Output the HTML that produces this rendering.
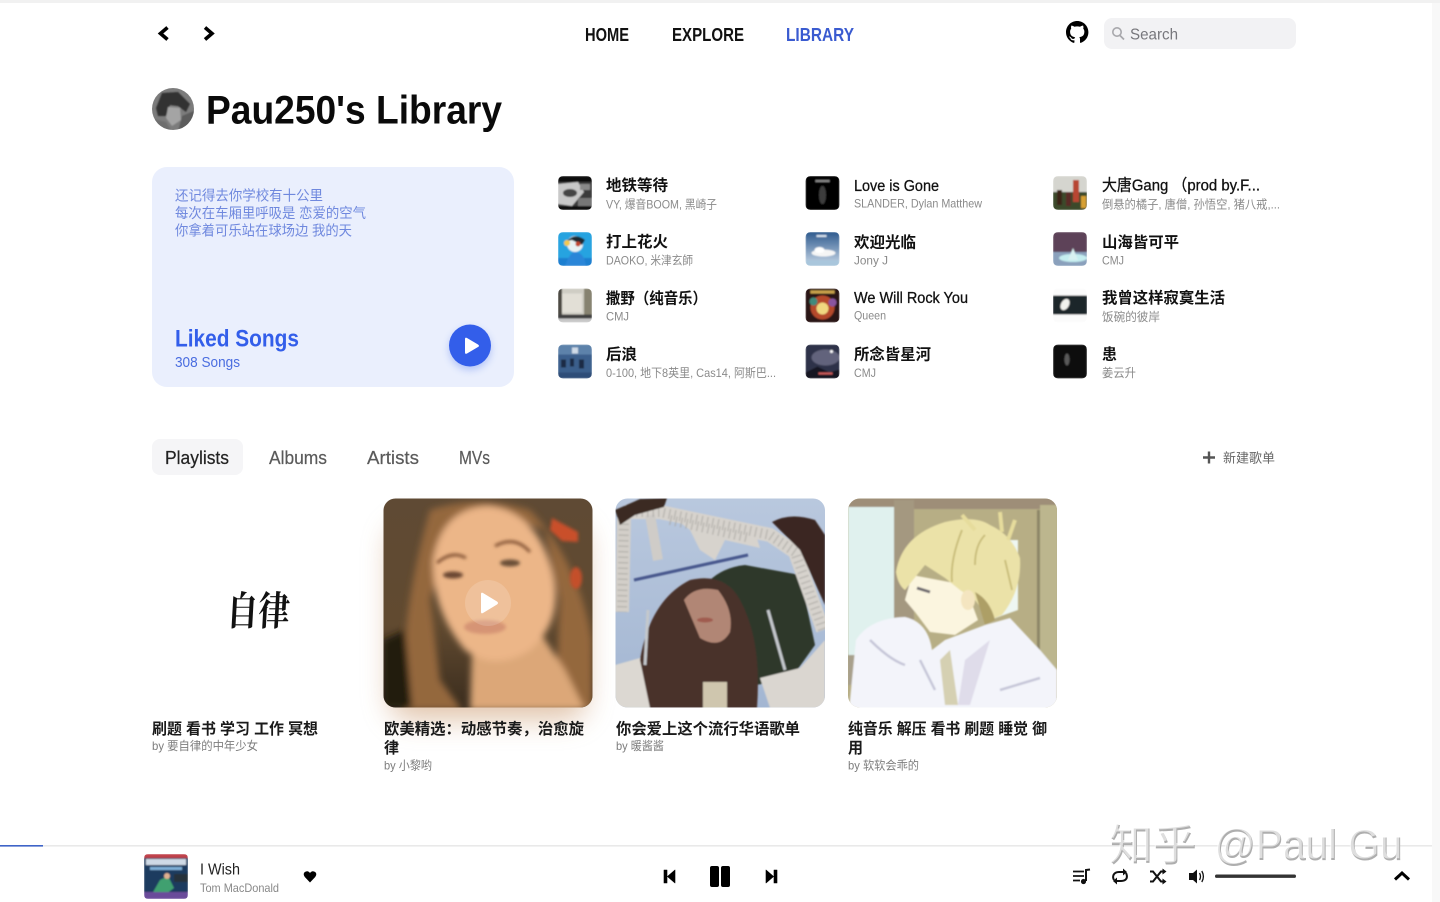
<!DOCTYPE html>
<html><head><meta charset="utf-8"><title>Pau250's Library</title>
<style>
html,body{margin:0;padding:0;background:#fff;width:1440px;height:902px;overflow:hidden}
svg{display:block}
text{font-family:"Liberation Sans","Noto Sans CJK SC",sans-serif}
.tt{font-size:15.5px;font-weight:700;fill:#111}
.tl{font-size:16px;font-weight:400;fill:#111;stroke:#111;stroke-width:.3px}
.st{font-size:12px;fill:#8a8a8a}
.ct{font-size:15.5px;font-weight:700;fill:#1a1a1a}
.cs{font-size:12px;fill:#7d7d7d}
.tab{font-size:18px;fill:#5a5a5a;stroke:#5a5a5a;stroke-width:.2px}
.nav{font-size:18px;font-weight:700;fill:#111}
</style></head><body>
<svg width="1440" height="902" viewBox="0 0 1440 902" xmlns="http://www.w3.org/2000/svg">
<defs>
<clipPath id="t"><rect width="34" height="34" rx="5"/></clipPath>
<clipPath id="c1"><rect x="383.5" y="498.5" width="209" height="209" rx="12"/></clipPath>
<clipPath id="c2"><rect x="615.5" y="498.5" width="209.5" height="209" rx="12"/></clipPath>
<clipPath id="c3"><rect x="848" y="498.5" width="209" height="209" rx="12"/></clipPath>
<clipPath id="pc"><rect width="44" height="45" rx="4"/></clipPath>
<clipPath id="av"><circle cx="173" cy="109" r="21"/></clipPath>
<filter id="b07" x="-10%" y="-10%" width="120%" height="120%"><feGaussianBlur stdDeviation=".7"/></filter>
<filter id="b1" x="-10%" y="-10%" width="120%" height="120%"><feGaussianBlur stdDeviation=".9"/></filter>
<filter id="b2" x="-10%" y="-10%" width="120%" height="120%"><feGaussianBlur stdDeviation="1.6"/></filter>
<filter id="b5" x="-20%" y="-20%" width="140%" height="140%"><feGaussianBlur stdDeviation="3.5"/></filter>
<filter id="b16" x="-30%" y="-30%" width="160%" height="160%"><feGaussianBlur stdDeviation="14"/></filter>
<filter id="bs" x="-50%" y="-50%" width="200%" height="200%"><feGaussianBlur stdDeviation="4"/></filter>
<linearGradient id="g1" x1="0" y1="0" x2="0" y2="1"><stop offset="0" stop-color="#5f4a34"/><stop offset=".6" stop-color="#614a30"/><stop offset="1" stop-color="#3b2d1e"/></linearGradient>
<linearGradient id="g2" x1="0" y1="0" x2="0" y2="1"><stop offset="0" stop-color="#b9c8de"/><stop offset="1" stop-color="#a3b6d2"/></linearGradient>
<linearGradient id="sk" x1="0" y1="0" x2="0" y2="1"><stop offset="0" stop-color="#2e5a8e"/><stop offset="1" stop-color="#c9d8e8"/></linearGradient>
</defs>

<rect width="1440" height="902" fill="#fff"/>
<rect width="1440" height="3" fill="#f1f1f1"/>
<rect x="1432" y="3" width="8" height="899" fill="#f8f8f8"/>

<!-- top nav -->
<path d="M167.500 27.500 L160.500 33.500 L167.500 39.500" fill="none" stroke="#000" stroke-width="3.600"/>
<path d="M205 27.500 L212 33.500 L205 39.500" fill="none" stroke="#000" stroke-width="3.600"/>
<text class="nav" x="585" y="41" textLength="44" lengthAdjust="spacingAndGlyphs">HOME</text>
<text class="nav" x="672" y="41" textLength="72" lengthAdjust="spacingAndGlyphs">EXPLORE</text>
<text class="nav" x="786" y="41" textLength="68" lengthAdjust="spacingAndGlyphs" style="fill:#3a5bd0">LIBRARY</text>
<path transform="translate(1066,21) scale(1.4)" fill="#000" d="M8 0C3.58 0 0 3.58 0 8c0 3.54 2.29 6.53 5.47 7.59.4.07.55-.17.55-.38 0-.19-.01-.82-.01-1.49-2.01.37-2.53-.49-2.69-.94-.09-.23-.48-.94-.82-1.13-.28-.15-.68-.52-.01-.53.63-.01 1.08.58 1.23.82.72 1.21 1.87.87 2.33.66.07-.52.28-.87.51-1.07-1.78-.2-3.64-.89-3.64-3.95 0-.87.31-1.59.82-2.15-.08-.2-.36-1.02.08-2.12 0 0 .67-.21 2.2.82.64-.18 1.32-.27 2-.27.68 0 1.36.09 2 .27 1.53-1.04 2.2-.82 2.2-.82.44 1.1.16 1.92.08 2.12.51.56.82 1.27.82 2.15 0 3.07-1.87 3.75-3.65 3.95.29.25.54.73.54 1.48 0 1.07-.01 1.93-.01 2.2 0 .21.15.46.55.38A8.013 8.013 0 0016 8c0-4.42-3.58-8-8-8z"/>
<rect x="1104" y="18" width="192" height="31" rx="8" fill="#f2f2f4"/>
<circle cx="1117" cy="32" r="4.200" fill="none" stroke="#a8a8ac" stroke-width="1.600"/>
<path d="M1120 35.500 L1124 39.500" stroke="#a8a8ac" stroke-width="1.800"/>
<text x="1130" y="39.500" font-size="16" fill="#77777c" textLength="48" lengthAdjust="spacingAndGlyphs">Search</text>

<!-- heading -->
<g clip-path="url(#av)">
<rect x="150" y="86" width="46" height="46" fill="#7c7c7c"/>
<g filter="url(#b07)">
<path d="M156 108 L162 93 L178 92 L190 104 L186 112 L178 106 L170 105 L166 116 L158 116Z" fill="#303030"/>
<path d="M168 107 L180 108 L181 120 L172 126 L166 118Z" fill="#a4a4a4"/>
<path d="M182 116 L196 110 L196 132 L178 132Z" fill="#5c5c5c"/>
<path d="M150 118 L166 122 L172 132 L150 132Z" fill="#6e6e6e"/>
</g></g>
<text x="206" y="123.500" font-size="40" font-weight="700" fill="#0a0a0a" textLength="296" lengthAdjust="spacingAndGlyphs">Pau250's Library</text>

<!-- liked card -->
<rect x="152" y="167" width="362" height="220" rx="15" fill="#eaeffd"/>
<g font-size="14" fill="#6f88de">
<text x="175" y="200.500" textLength="148" lengthAdjust="spacingAndGlyphs">还记得去你学校有十公里</text>
<text x="175" y="218" textLength="191" lengthAdjust="spacingAndGlyphs">每次在车厢里呼吸是 恋爱的空气</text>
<text x="175" y="235.500" textLength="177" lengthAdjust="spacingAndGlyphs">你拿着可乐站在球场边 我的天</text>
</g>
<text x="175" y="346.500" font-size="24" font-weight="700" fill="#335eea" textLength="124" lengthAdjust="spacingAndGlyphs">Liked Songs</text>
<text x="175" y="367" font-size="15" fill="#4a6de0" textLength="65" lengthAdjust="spacingAndGlyphs">308 Songs</text>
<circle cx="470" cy="349" r="21" fill="#335eea" opacity=".3" filter="url(#bs)"/>
<circle cx="470" cy="345.500" r="21" fill="#335eea"/>
<path d="M465 339 Q465 337 467 338 L478 344.500 Q480 346 478 347 L467 353.500 Q465 354.500 465 352.500Z" fill="#fff"/>

<!-- thumbs column 1 -->
<g transform="translate(558,176)" clip-path="url(#t)"><g filter="url(#b07)"><rect width="34" height="34" fill="#3a3a3a"/><rect width="34" height="6" fill="#111"/><path d="M0 8 L20 6 L26 16 L14 30 L0 28Z" fill="#c8c8c8"/><ellipse cx="12" cy="17" rx="7" ry="4" fill="#444"/><rect x="22" y="8" width="10" height="6" fill="#8a8a8a"/><rect x="20" y="22" width="14" height="8" fill="#777"/><rect y="30" width="34" height="4" fill="#111"/></g></g>
<g transform="translate(558,232)" clip-path="url(#t)"><g filter="url(#b07)"><rect width="34" height="34" fill="#27a3e0"/><rect y="26" width="34" height="8" fill="#1f7fd0"/><circle cx="17" cy="12" r="8" fill="#e8f2f4"/><path d="M9 9 Q17 0 27 8 L24 13 L14 8Z" fill="#1c2a30"/><path d="M7 34 Q12 20 17 20 Q26 20 28 34Z" fill="#2a86d8"/><circle cx="9" cy="11" r="3" fill="#f3c94f"/><circle cx="20" cy="12" r="2.500" fill="#c2452f"/></g></g>
<g transform="translate(558,288.500)" clip-path="url(#t)"><g filter="url(#b07)"><rect width="34" height="34" fill="#cfcdc4"/><rect width="4" height="26" fill="#4a473f"/><rect x="4" y="5" width="20" height="19" fill="#e2dfd6"/><rect x="26" y="0" width="8" height="26" fill="#86826f"/><rect y="26" width="34" height="4" fill="#3f3f3f"/><rect y="30" width="34" height="4" fill="#c8c8c8"/></g></g>
<g transform="translate(558,344.500)" clip-path="url(#t)"><g filter="url(#b07)"><rect width="34" height="34" fill="#3a5f8c"/><rect width="34" height="10" fill="#5d82aa"/><rect x="14" y="3" width="6" height="6" fill="#cfdbe8"/><rect x="3" y="15" width="5" height="8" fill="#1c2c44"/><rect x="12" y="14" width="4" height="8" fill="#1c2c44"/><rect x="21" y="15" width="5" height="9" fill="#1c2c44"/><rect y="28" width="34" height="6" fill="#2f4e78"/></g></g>
<!-- thumbs column 2 -->
<g transform="translate(805.500,176)" clip-path="url(#t)"><g filter="url(#b07)"><rect width="34" height="34" fill="#060606"/><rect x="10" y="4" width="14" height="2" fill="#888"/><ellipse cx="17" cy="19" rx="3.500" ry="9" fill="#3c3c3c"/></g></g>
<g transform="translate(805.500,232)" clip-path="url(#t)"><g filter="url(#b07)"><rect width="34" height="34" fill="url(#sk)"/><ellipse cx="18" cy="21" rx="12" ry="3.500" fill="#f5f5f5"/><ellipse cx="14" cy="18" rx="5" ry="3" fill="#fff"/><rect y="28" width="34" height="6" fill="#a9c6dc"/><rect x="11" y="3" width="10" height="2" fill="#d8e4ef"/></g></g>
<g transform="translate(805.500,288.500)" clip-path="url(#t)"><g filter="url(#b07)"><rect width="34" height="34" fill="#2a1612"/><rect x="5" y="2" width="24" height="3" fill="#c9a24c"/><circle cx="17" cy="19" r="12" fill="#b5482c"/><circle cx="17" cy="20" r="6" fill="#f0d880"/><circle cx="8" cy="13" r="4" fill="#3f8a7c"/><circle cx="27" cy="14" r="4" fill="#8a55a0"/></g></g>
<g transform="translate(805.500,344.500)" clip-path="url(#t)"><g filter="url(#b07)"><rect width="34" height="34" fill="#2e3348"/><ellipse cx="20" cy="13" rx="14" ry="8" fill="#62637c"/><circle cx="26" cy="7" r="1.500" fill="#fff"/><path d="M0 28 L12 22 L24 28 L34 25 L34 34 L0 34Z" fill="#141622"/><rect x="13" y="28" width="14" height="2" fill="#c85a5a"/></g></g>
<!-- thumbs column 3 -->
<g transform="translate(1053,176)" clip-path="url(#t)"><g filter="url(#b07)"><rect width="34" height="34" fill="#d5d5cf"/><rect y="16" width="34" height="18" fill="#3a4a2c"/><rect x="20" y="4" width="6" height="22" fill="#b84530"/><rect x="4" y="14" width="5" height="15" fill="#3a2418"/><rect x="13" y="16" width="5" height="14" fill="#5a2a26"/><rect x="28" y="20" width="5" height="12" fill="#d8a030"/></g></g>
<g transform="translate(1053,232)" clip-path="url(#t)"><g filter="url(#b07)"><rect width="34" height="34" fill="#5d4258"/><rect y="20" width="34" height="14" fill="#8aa0bc"/><ellipse cx="20" cy="26" rx="14" ry="4" fill="#c5eef0"/><path d="M20 16 L25 28 L15 28Z" fill="#d9f2f2"/></g></g>
<g transform="translate(1053,288.500)" clip-path="url(#t)"><g filter="url(#b07)"><rect width="34" height="34" fill="#fbfbfb"/><rect y="7" width="34" height="19" fill="#1f262c"/><ellipse cx="12" cy="16" rx="4" ry="6" fill="#f2f2ee" transform="rotate(30 12 16)"/></g></g>
<g transform="translate(1053,344.500)" clip-path="url(#t)"><g filter="url(#b07)"><rect width="34" height="34" fill="#070707"/><ellipse cx="14" cy="15" rx="2.500" ry="6" fill="#5a5a5a"/></g></g>

<!-- song text -->
<text class="tt" x="606" y="190.500" textLength="62" lengthAdjust="spacingAndGlyphs">地铁等待</text>
<text class="st" x="606" y="208.500" textLength="111" lengthAdjust="spacingAndGlyphs">VY, 爆音BOOM, 黑崎子</text>
<text class="tt" x="606" y="247" textLength="62" lengthAdjust="spacingAndGlyphs">打上花火</text>
<text class="st" x="606" y="264.500" textLength="87" lengthAdjust="spacingAndGlyphs">DAOKO, 米津玄師</text>
<text class="tt" x="606" y="303.500" textLength="101" lengthAdjust="spacingAndGlyphs">撒野（纯音乐）</text>
<text class="st" x="606" y="320.500" textLength="23" lengthAdjust="spacingAndGlyphs">CMJ</text>
<text class="tt" x="606" y="359.500" textLength="31" lengthAdjust="spacingAndGlyphs">后浪</text>
<text class="st" x="606" y="377" textLength="170" lengthAdjust="spacingAndGlyphs">0-100, 地下8英里, Cas14, 阿斯巴...</text>

<text class="tl" x="854" y="191" textLength="85" lengthAdjust="spacingAndGlyphs">Love is Gone</text>
<text class="st" x="854" y="207.500" textLength="128" lengthAdjust="spacingAndGlyphs">SLANDER, Dylan Matthew</text>
<text class="tt" x="854" y="247.500" textLength="62" lengthAdjust="spacingAndGlyphs">欢迎光临</text>
<text class="st" x="854" y="264.500" textLength="34" lengthAdjust="spacingAndGlyphs">Jony J</text>
<text class="tl" x="854" y="303" textLength="114" lengthAdjust="spacingAndGlyphs">We Will Rock You</text>
<text class="st" x="854" y="319.500" textLength="32" lengthAdjust="spacingAndGlyphs">Queen</text>
<text class="tt" x="854" y="359.500" textLength="77" lengthAdjust="spacingAndGlyphs">所念皆星河</text>
<text class="st" x="854" y="377" textLength="22" lengthAdjust="spacingAndGlyphs">CMJ</text>

<text class="tl" x="1102" y="190.500" textLength="158" lengthAdjust="spacingAndGlyphs">大唐Gang （prod by.F...</text>
<text class="st" x="1102" y="208.500" textLength="178" lengthAdjust="spacingAndGlyphs">倒悬的橘子, 唐僧, 孙悟空, 猪八戒,...</text>
<text class="tt" x="1102" y="247.500" textLength="77" lengthAdjust="spacingAndGlyphs">山海皆可平</text>
<text class="st" x="1102" y="264.500" textLength="22" lengthAdjust="spacingAndGlyphs">CMJ</text>
<text class="tt" x="1102" y="303" textLength="123" lengthAdjust="spacingAndGlyphs">我曾这样寂寞生活</text>
<text class="st" x="1102" y="321" textLength="58" lengthAdjust="spacingAndGlyphs">饭碗的彼岸</text>
<text class="tt" x="1102" y="359.500" textLength="15" lengthAdjust="spacingAndGlyphs">患</text>
<text class="st" x="1102" y="377" textLength="34" lengthAdjust="spacingAndGlyphs">姜云升</text>

<!-- tabs -->
<rect x="152" y="439" width="91" height="36" rx="8" fill="#f5f5f7"/>
<text class="tab" style="fill:#222;stroke:#222" x="165" y="464" textLength="64" lengthAdjust="spacingAndGlyphs">Playlists</text>
<text class="tab" x="269" y="464" textLength="58" lengthAdjust="spacingAndGlyphs">Albums</text>
<text class="tab" x="367" y="464" textLength="52" lengthAdjust="spacingAndGlyphs">Artists</text>
<text class="tab" x="459" y="464" textLength="31" lengthAdjust="spacingAndGlyphs">MVs</text>
<path d="M1209 451.500 V463.500 M1203 457.500 H1215" stroke="#555" stroke-width="2.400"/>
<text x="1223" y="462.500" font-size="13" fill="#666" textLength="52" lengthAdjust="spacingAndGlyphs">新建歌单</text>

<!-- card 0 -->
<text transform="translate(226,625) scale(1,1.25) skewX(-4)" x="0" y="0" font-size="32" font-weight="700" fill="#111" textLength="63" lengthAdjust="spacingAndGlyphs" style='font-family:"Noto Serif CJK SC","Liberation Serif",serif'>自律</text>

<!-- card 1 -->
<rect x="390" y="525" width="196" height="195" rx="20" fill="#c99468" opacity=".55" filter="url(#b16)"/>
<g clip-path="url(#c1)">
<rect x="383" y="498" width="210" height="210" fill="url(#g1)"/>
<g filter="url(#b5)">
<path d="M430 510 Q480 494 530 510 Q578 560 592 640 L593 710 L555 710 L560 600 L545 530 L500 515 L450 530 L430 600 L440 680 L462 710 L405 710 Q398 620 430 510Z" fill="#94683c"/>
<path d="M383 640 L405 630 L412 708 L383 708Z" fill="#241a10"/>
<path d="M470 710 L472 650 L535 625 L565 670 L585 710Z" fill="#dca778"/>
<path d="M433 560 Q442 508 488 506 Q535 510 552 570 Q565 620 530 650 Q495 672 465 650 Q432 610 433 560Z" fill="#ecb688"/>
</g>
<g filter="url(#b2)">
<path d="M437 563 Q452 550 466 558" stroke="#8a5a3a" stroke-width="3" fill="none"/>
<path d="M495 546 Q515 535 530 552" stroke="#8a5a3a" stroke-width="3" fill="none"/>
<ellipse cx="453" cy="575" rx="10" ry="3.500" fill="#6a4632"/>
<ellipse cx="510" cy="563" rx="10" ry="3.500" fill="#6a5038"/>
<ellipse cx="485" cy="627" rx="21" ry="7" fill="#d69474"/>
<path d="M552 518 L578 532 L578 542 L562 541 L550 530Z" fill="#c9502a"/>
<ellipse cx="576" cy="578" rx="6" ry="11" fill="#c4502a"/>
</g>
<circle cx="488" cy="603" r="23" fill="#fff" fill-opacity=".16"/>
<path d="M481 594 Q481 592 483 593 L497 601.500 Q499 603 497 604.500 L483 613 Q481 614 481 612Z" fill="#fff"/>
</g>

<!-- card 2 -->
<g clip-path="url(#c2)">
<rect x="615" y="498" width="211" height="210" fill="url(#g2)"/>
<g filter="url(#b1)">
<path d="M690 620 Q700 570 745 565 L800 575 L815 645 L790 680 L720 690Z" fill="#2d372a"/>
<path d="M634 580 L748 555" stroke="#46568c" stroke-width="3"/>
<path d="M624 518 L622 612" stroke="#d3cfc9" stroke-width="14" fill="none"/>
<path d="M625 512 L660 512 L770 535 L795 552 L823 630" stroke="#d7d3cd" stroke-width="14" fill="none"/>
<path d="M670 515 L755 532 L760 548 L725 540 L715 560 L700 550 L690 530Z" fill="#d7d3cd"/>
<path d="M650 515 L658 560" stroke="#cfccc8" stroke-width="10" fill="none"/>
<path d="M615 665 L640 658 L662 708 L615 708Z" fill="#dcd8d2"/>
<path d="M760 678 L800 668 L825 640 L825 708 L770 708Z" fill="#dad6d0"/>
<path d="M625 512 L660 512 L770 535 L795 552 L823 630" stroke="#a9a6a2" stroke-width="10" stroke-dasharray="1.500 4" fill="none" opacity=".6"/>
<path d="M624 518 L622 612" stroke="#a9a6a2" stroke-width="10" stroke-dasharray="1.500 4" fill="none" opacity=".6"/>
<path d="M670 520 L750 538" stroke="#a9a6a2" stroke-width="10" stroke-dasharray="1.500 4" fill="none" opacity=".6"/>
<path d="M615 510 L640 499 L667 498 L664 507 L635 515 L620 525Z" fill="#3b2a22"/>
<path d="M772 522 Q790 512 815 520 L825 535 L825 605 L800 550Z" fill="#3a2620"/>
<path d="M640 660 Q650 600 690 580 Q725 572 740 600 Q762 640 757 708 L650 708Z" fill="#4a3029"/>
<path d="M684 600 Q695 585 718 590 Q734 610 730 632 Q720 650 700 638Z" fill="#b18674"/>
<ellipse cx="705" cy="620" rx="8" ry="2.500" fill="#a05c50"/>
<rect x="703" y="682" width="24" height="26" fill="#cfc6ae"/>
<path d="M648 610 L645 665 M768 610 L785 670" stroke="#c4c8cc" stroke-width="3"/>
</g>
</g>

<!-- card 3 -->
<g clip-path="url(#c3)">
<rect x="848" y="498" width="210" height="210" fill="#b7ae85"/>
<g filter="url(#b1)">
<rect x="848" y="498" width="210" height="11" fill="#9e8e78"/>
<rect x="848" y="507" width="46" height="148" fill="#e0f1ee"/>
<rect x="894" y="500" width="20" height="120" fill="#a49880"/>
<rect x="1040" y="505" width="17" height="165" fill="#bcb68e"/>
<rect x="1037" y="510" width="3" height="150" fill="#8d8668"/>
<rect x="848" y="655" width="10" height="30" fill="#a8a08c"/>
<path d="M1005 540 L1018 540 L1018 610 L990 620Z" fill="#eef7f2"/>
<path d="M905 600 L912 575 L965 585 L978 620 L955 635 L930 632 L915 612Z" fill="#fbf5df"/>
<path d="M896 572 Q902 535 945 522 Q975 515 990 525 Q1012 535 1020 558 Q1022 590 1002 615 L990 620 L975 600 L960 590 L945 578 L925 565 L905 590 Q898 585 896 572Z" fill="#ebe2a8"/>
<path d="M962 515 L975 530 M1000 512 L1002 532 M1015 520 L1008 540" stroke="#e6dc9c" stroke-width="4"/>
<path d="M962 530 Q950 560 952 582 M985 535 Q975 545 975 565 M1005 560 L1012 590" stroke="#c7bb78" stroke-width="1.800" fill="none"/>
<path d="M975 592 Q990 600 995 620 L985 625Z" fill="#ad9f66"/>
<ellipse cx="968" cy="600" rx="7" ry="10" fill="#f4e5c0"/>
<path d="M917 588 L930 592" stroke="#6e6a70" stroke-width="3"/>
<path d="M849 710 L856 640 Q870 618 905 617 Q928 622 932 650 L945 640 L985 625 L1010 618 L1040 650 L1057 670 L1057 710Z" fill="#f3f4fa"/>
<path d="M965 660 L990 640 L970 705 L958 705Z" fill="#dfdcea"/>
<path d="M950 650 L958 705 L945 705 L940 660Z" fill="#d5d0b2"/>
<path d="M870 640 Q890 660 905 665 M1000 690 L1040 678 M920 660 L935 690" stroke="#c6c6d8" stroke-width="2.500" fill="none"/>
</g>
</g>

<!-- card text -->
<text class="ct" x="152" y="734" textLength="166" lengthAdjust="spacingAndGlyphs">刷题 看书 学习 工作 冥想</text>
<text class="cs" x="152" y="750" textLength="106" lengthAdjust="spacingAndGlyphs">by 要自律的中年少女</text>
<text class="ct" x="384" y="734" textLength="200" lengthAdjust="spacingAndGlyphs">欧美精选：动感节奏，治愈旋</text>
<text class="ct" x="384" y="753" textLength="15" lengthAdjust="spacingAndGlyphs">律</text>
<text class="cs" x="384" y="769.500" textLength="48" lengthAdjust="spacingAndGlyphs">by 小黎哟</text>
<text class="ct" x="616" y="734" textLength="184" lengthAdjust="spacingAndGlyphs">你会爱上这个流行华语歌单</text>
<text class="cs" x="616" y="750" textLength="48" lengthAdjust="spacingAndGlyphs">by 暖酱酱</text>
<text class="ct" x="848" y="734" textLength="199" lengthAdjust="spacingAndGlyphs">纯音乐 解压 看书 刷题 睡觉 御</text>
<text class="ct" x="848" y="753" textLength="15" lengthAdjust="spacingAndGlyphs">用</text>
<text class="cs" x="848" y="769.500" textLength="71" lengthAdjust="spacingAndGlyphs">by 软软会乖的</text>

<!-- player -->
<rect x="0" y="845" width="1432" height="1.600" fill="#e9e9e9"/>
<rect x="0" y="845" width="43" height="1.600" fill="#3f64c8"/>
<g transform="translate(144,854)" clip-path="url(#pc)"><g filter="url(#b07)">
<rect width="44" height="45" fill="#1d3a5e"/>
<rect width="44" height="4" fill="#c0404a"/>
<rect x="2" y="5" width="40" height="6" fill="#cfdae6"/>
<rect x="6" y="13" width="32" height="3" fill="#7fb0d8"/>
<path d="M8 40 L16 26 L24 22 L30 34 L22 40Z" fill="#3fa070"/>
<circle cx="23" cy="22" r="3" fill="#e0b090"/>
<rect x="30" y="20" width="14" height="8" fill="#28303a"/>
<rect y="38" width="44" height="7" fill="#6a4c9a"/>
</g></g>
<text x="200" y="874.500" font-size="16" fill="#222" textLength="40" lengthAdjust="spacingAndGlyphs">I Wish</text>
<text x="200" y="892" font-size="12" fill="#888" textLength="79" lengthAdjust="spacingAndGlyphs">Tom MacDonald</text>
<path d="M310 882.500 L304.800 877 Q302.800 874.500 304.500 872.300 Q307.800 869.800 310 873 Q312.200 869.800 315.500 872.300 Q317.200 874.500 315.200 877Z" fill="#000"/>
<path d="M664 870 H667 V883 H664Z M675 870 V883 L667.500 876.500Z" fill="#000" stroke="#000" stroke-width=".6" stroke-linejoin="round"/>
<rect x="710" y="866" width="9" height="21" rx="2" fill="#000"/>
<rect x="721" y="866" width="9" height="21" rx="2" fill="#000"/>
<path d="M774 870 H777 V883 H774Z M766 870 V883 L773.500 876.500Z" fill="#000" stroke="#000" stroke-width=".6" stroke-linejoin="round"/>

<!-- right controls -->
<path d="M1073 871.500 H1084 M1073 876 H1084 M1073 880.500 H1080" stroke="#111" stroke-width="1.800" fill="none"/>
<path d="M1086 881 V870 L1090 869.500" stroke="#111" stroke-width="2" fill="none"/>
<circle cx="1083.500" cy="881.500" r="2.600" fill="#111"/>
<path d="M1114 880 Q1112.500 877.500 1113.500 875 Q1115 872 1119 872 H1124 M1126 873 Q1127.500 876 1126.500 878.500 Q1125 881 1121 881 H1116" fill="none" stroke="#111" stroke-width="2"/>
<path d="M1123 868.500 L1127 872 L1123 875.500Z M1117 877.500 L1113 881 L1117 884.500Z" fill="#111"/>
<path d="M1150 871.500 H1153 L1161 881.500 H1164 M1150 881.500 H1153 L1161 871.500 H1164" fill="none" stroke="#111" stroke-width="2"/>
<path d="M1162.500 868.500 L1166.500 871.500 L1162.500 874.500Z M1162.500 878.500 L1166.500 881.500 L1162.500 884.500Z" fill="#111"/>
<path d="M1189 873 H1193 L1197 869.500 V883.500 L1193 880 H1189Z" fill="#111"/>
<path d="M1199.500 873 Q1201.500 876.500 1199.500 880 M1201.800 871 Q1205 876.500 1201.800 882" fill="none" stroke="#111" stroke-width="1.300"/>
<rect x="1215" y="874.500" width="81" height="3.400" rx="1.700" fill="#333"/>
<path d="M1395 879.500 L1402 873 L1409 879.500" fill="none" stroke="#000" stroke-width="3"/>

<!-- watermark -->
<g font-size="43" fill="#aeaeae">
<text x="1110" y="861" textLength="87" lengthAdjust="spacingAndGlyphs">知乎</text>
<text x="1215" y="860" textLength="188" lengthAdjust="spacingAndGlyphs">@Paul Gu</text>
</g>
<g font-size="43" fill="#fff" opacity=".6">
<text x="1109" y="859" textLength="87" lengthAdjust="spacingAndGlyphs">知乎</text>
<text x="1214" y="858" textLength="188" lengthAdjust="spacingAndGlyphs">@Paul Gu</text>
</g>
</svg>
</body></html>
